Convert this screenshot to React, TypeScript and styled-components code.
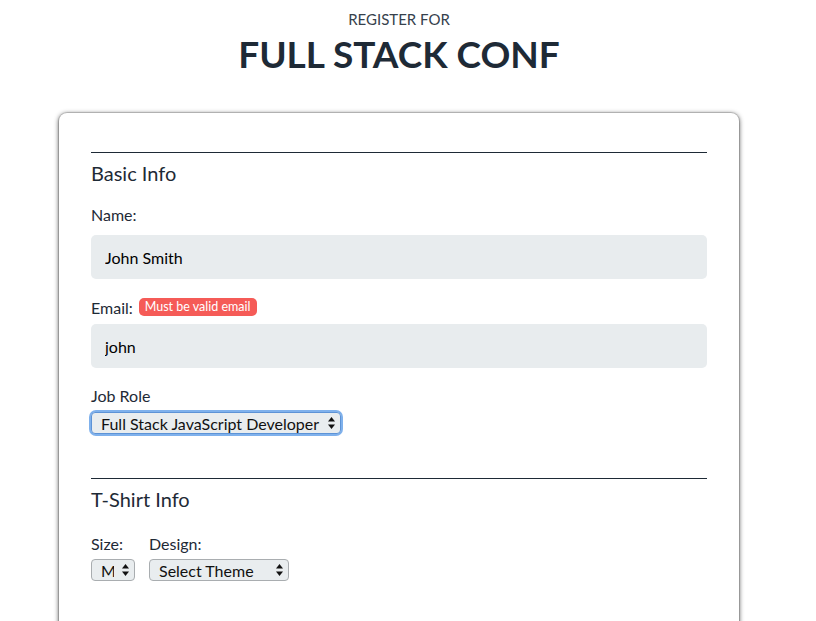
import React from "react";
import styled, { createGlobalStyle } from "styled-components";

const Global = createGlobalStyle`
  html, body { margin: 0; padding: 0; background: #fff; }
  body { font-family: Lato, "Noto Sans", sans-serif; color: #1e2a36; }
  * { box-sizing: border-box; }
`;

const Page = styled.div`
  width: 798px;
  padding-top: 10px;
`;

const Header = styled.header`
  text-align: center;
`;

const Kicker = styled.div`
  font-size: 15px;
  line-height: 18px;
  color: #36414c;
  text-transform: uppercase;
`;

const Title = styled.h1`
  margin: 3px 0 0;
  font-size: 37px;
  line-height: 46px;
  font-weight: 700;
  color: #1e2a36;
`;

const Card = styled.form`
  width: 680px;
  margin: 36px auto 0;
  padding: 39px 32px 40px;
  background: #fff;
  border-radius: 8px;
  box-shadow: 0 0 0 1px rgba(0, 0, 0, 0.12), 0 1px 5px rgba(0, 0, 0, 0.75);
  min-height: 560px;
`;

const Section = styled.fieldset<{ $top?: number }>`
  border: 0;
  margin: ${(p) => p.$top ?? 0}px 0 0;
  padding: 0;
  border-top: 1px solid #1e2a36;
`;

const Legend = styled.h2`
  margin: 8px 0 0;
  font-size: 20px;
  line-height: 24px;
  font-weight: 400;
`;

const Label = styled.label<{ $top: number; $bottom: number }>`
  display: flex;
  align-items: center;
  gap: 4px;
  height: 20px;
  margin: ${(p) => p.$top}px 0 ${(p) => p.$bottom}px;
  font-size: 16px;
  color: #1e2a36;
`;

const Badge = styled.span`
  display: inline-block;
  margin-left: 2px;
  padding: 0 6px;
  height: 18px;
  line-height: 18px;
  font-size: 12.5px;
  color: #fff;
  background: #f55b57;
  border-radius: 5px;
`;

const TextInput = styled.input`
  display: block;
  width: 100%;
  height: 44px;
  padding: 0 14px;
  border: 0;
  border-radius: 5px;
  background: #e8ecee;
  font-family: inherit;
  font-size: 16px;
  font-weight: 400;
  color: #000;
  outline: none;
`;

const SelectWrap = styled.div<{ $w: number; $focus?: boolean }>`
  position: relative;
  display: inline-block;
  width: ${(p) => p.$w}px;
  height: 22px;
  border-radius: 5px;
  box-shadow: ${(p) => (p.$focus ? "0 0 0 2px #7fb1ec" : "none")};
`;

const Select = styled.select<{ $focus?: boolean }>`
  appearance: none;
  -webkit-appearance: none;
  width: 100%;
  height: 100%;
  padding: 0 20px 0 9px;
  border: 1px solid ${(p) => (p.$focus ? "#5d93d6" : "#a9adb0")};
  border-radius: 4px;
  background: #e9edef;
  font-family: inherit;
  font-size: 16px;
  color: #111;
  outline: none;
`;

const Arrows = styled.svg`
  position: absolute;
  right: 6px;
  top: 5px;
  pointer-events: none;
`;

const Row = styled.div`
  display: flex;
  gap: 14px;
`;

const Col = styled.div``;

const Arrow = () => (
  <Arrows width="7" height="12" viewBox="0 0 7 12">
    <path d="M3.5 0 L7 4.5 H0 Z" fill="#111" />
    <path d="M3.5 12 L7 7.5 H0 Z" fill="#111" />
  </Arrows>
);

export default function App() {
  return (
    <>
      <Global />
      <Page>
        <Header>
          <Kicker>Register for</Kicker>
          <Title>FULL STACK CONF</Title>
        </Header>
        <Card>
          <Section>
            <Legend>Basic Info</Legend>
            <Label $top={19} $bottom={11}>Name:</Label>
            <TextInput defaultValue="John Smith" />
            <Label $top={18} $bottom={7}>
              Email: <Badge>Must be valid email</Badge>
            </Label>
            <TextInput defaultValue="john" />
            <Label $top={17} $bottom={7}>Job Role</Label>
            <SelectWrap $w={250} $focus>
              <Select $focus defaultValue="fsjs">
                <option value="fsjs">Full Stack JavaScript Developer</option>
              </Select>
              <Arrow />
            </SelectWrap>
          </Section>
          <Section $top={44}>
            <Legend>T-Shirt Info</Legend>
            <Row>
              <Col>
                <Label $top={22} $bottom={6}>Size:</Label>
                <SelectWrap $w={44}>
                  <Select defaultValue="m">
                    <option value="m">M</option>
                  </Select>
                  <Arrow />
                </SelectWrap>
              </Col>
              <Col>
                <Label $top={22} $bottom={6}>Design:</Label>
                <SelectWrap $w={140}>
                  <Select defaultValue="">
                    <option value="">Select Theme</option>
                  </Select>
                  <Arrow />
                </SelectWrap>
              </Col>
            </Row>
          </Section>
        </Card>
      </Page>
    </>
  );
}
